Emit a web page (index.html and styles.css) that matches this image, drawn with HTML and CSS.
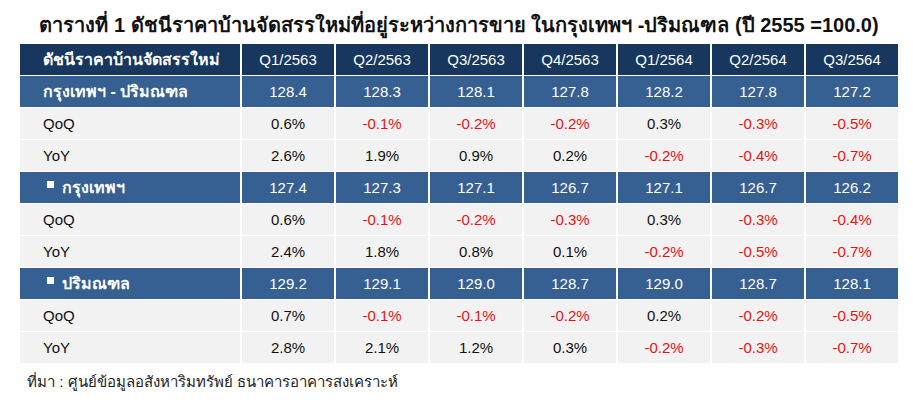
FILE: index.html
```html
<!DOCTYPE html>
<html lang="th">
<head>
<meta charset="utf-8">
<title>ดัชนีราคาบ้านจัดสรรใหม่</title>
<link rel="stylesheet" href="styles.css">
</head>
<body>
<div class="page">
  <h1 class="title">ตารางที่ 1 ดัชนีราคาบ้านจัดสรรใหม่ที่อยู่ระหว่างการขาย ในกรุงเทพฯ -ปริมณฑล (ปี 2555 =100.0)</h1>
  <div class="grid">
    <div class="cell head label thai">ดัชนีราคาบ้านจัดสรรใหม่</div>
    <div class="cell head">Q1/2563</div>
    <div class="cell head">Q2/2563</div>
    <div class="cell head">Q3/2563</div>
    <div class="cell head">Q4/2563</div>
    <div class="cell head">Q1/2564</div>
    <div class="cell head">Q2/2564</div>
    <div class="cell head">Q3/2564</div>

    <div class="cell sec label thai">กรุงเทพฯ - ปริมณฑล</div>
    <div class="cell sec">128.4</div>
    <div class="cell sec">128.3</div>
    <div class="cell sec">128.1</div>
    <div class="cell sec">127.8</div>
    <div class="cell sec">128.2</div>
    <div class="cell sec">127.8</div>
    <div class="cell sec">127.2</div>

    <div class="cell row label">QoQ</div>
    <div class="cell row">0.6%</div>
    <div class="cell row neg">-0.1%</div>
    <div class="cell row neg">-0.2%</div>
    <div class="cell row neg">-0.2%</div>
    <div class="cell row">0.3%</div>
    <div class="cell row neg">-0.3%</div>
    <div class="cell row neg">-0.5%</div>

    <div class="cell row label">YoY</div>
    <div class="cell row">2.6%</div>
    <div class="cell row">1.9%</div>
    <div class="cell row">0.9%</div>
    <div class="cell row">0.2%</div>
    <div class="cell row neg">-0.2%</div>
    <div class="cell row neg">-0.4%</div>
    <div class="cell row neg">-0.7%</div>

    <div class="cell sec label thai sub"><span class="bullet"></span>กรุงเทพฯ</div>
    <div class="cell sec">127.4</div>
    <div class="cell sec">127.3</div>
    <div class="cell sec">127.1</div>
    <div class="cell sec">126.7</div>
    <div class="cell sec">127.1</div>
    <div class="cell sec">126.7</div>
    <div class="cell sec">126.2</div>

    <div class="cell row label">QoQ</div>
    <div class="cell row">0.6%</div>
    <div class="cell row neg">-0.1%</div>
    <div class="cell row neg">-0.2%</div>
    <div class="cell row neg">-0.3%</div>
    <div class="cell row">0.3%</div>
    <div class="cell row neg">-0.3%</div>
    <div class="cell row neg">-0.4%</div>

    <div class="cell row label">YoY</div>
    <div class="cell row">2.4%</div>
    <div class="cell row">1.8%</div>
    <div class="cell row">0.8%</div>
    <div class="cell row">0.1%</div>
    <div class="cell row neg">-0.2%</div>
    <div class="cell row neg">-0.5%</div>
    <div class="cell row neg">-0.7%</div>

    <div class="cell sec label thai sub"><span class="bullet"></span>ปริมณฑล</div>
    <div class="cell sec">129.2</div>
    <div class="cell sec">129.1</div>
    <div class="cell sec">129.0</div>
    <div class="cell sec">128.7</div>
    <div class="cell sec">129.0</div>
    <div class="cell sec">128.7</div>
    <div class="cell sec">128.1</div>

    <div class="cell row label">QoQ</div>
    <div class="cell row">0.7%</div>
    <div class="cell row neg">-0.1%</div>
    <div class="cell row neg">-0.1%</div>
    <div class="cell row neg">-0.2%</div>
    <div class="cell row">0.2%</div>
    <div class="cell row neg">-0.2%</div>
    <div class="cell row neg">-0.5%</div>

    <div class="cell row label">YoY</div>
    <div class="cell row">2.8%</div>
    <div class="cell row">2.1%</div>
    <div class="cell row">1.2%</div>
    <div class="cell row">0.3%</div>
    <div class="cell row neg">-0.2%</div>
    <div class="cell row neg">-0.3%</div>
    <div class="cell row neg">-0.7%</div>
  </div>
  <p class="source">ที่มา : ศูนย์ข้อมูลอสังหาริมทรัพย์ ธนาคารอาคารสงเคราะห์</p>
</div>
</body>
</html>
```

FILE: styles.css
```css
html, body {
  margin: 0;
  padding: 0;
  background: #ffffff;
}

body {
  font-family: "Liberation Sans", Arial, "Noto Sans", sans-serif;
  color: #111111;
}

.page {
  width: 913px;
  padding: 0 0 0 20px;
  box-sizing: border-box;
}

.title {
  margin: 0;
  width: 878px;
  height: 44px;
  box-sizing: border-box;
  padding-top: 12px;
  text-align: center;
  font-size: 20px;
  line-height: 26px;
  font-weight: bold;
  color: #111111;
  white-space: nowrap;
}

.grid {
  display: grid;
  width: 878px;
  grid-template-columns: 220px repeat(7, 92px);
  grid-auto-rows: 31px;
  column-gap: 2px;
  row-gap: 1px;
}

.cell {
  display: flex;
  align-items: center;
  justify-content: center;
  font-size: 15px;
  white-space: nowrap;
}

.cell.label {
  justify-content: flex-start;
  padding-left: 23px;
}

.cell.thai {
  font-weight: bold;
  font-size: 16px;
}

.head {
  background: #17375e;
  color: #ffffff;
}

.sec {
  background: #376092;
  color: #ffffff;
}

.row {
  background: #f2f2f2;
  color: #111111;
}

.neg {
  color: #ee1111;
}

.cell.sub {
  padding-left: 27px;
}

.bullet {
  display: inline-block;
  width: 7px;
  height: 7px;
  background: #ffffff;
  margin-right: 8px;
  margin-bottom: 7px;
}

.source {
  margin: 0;
  padding: 9px 0 0 7px;
  font-size: 15px;
  line-height: 20px;
  color: #222222;
}
```
